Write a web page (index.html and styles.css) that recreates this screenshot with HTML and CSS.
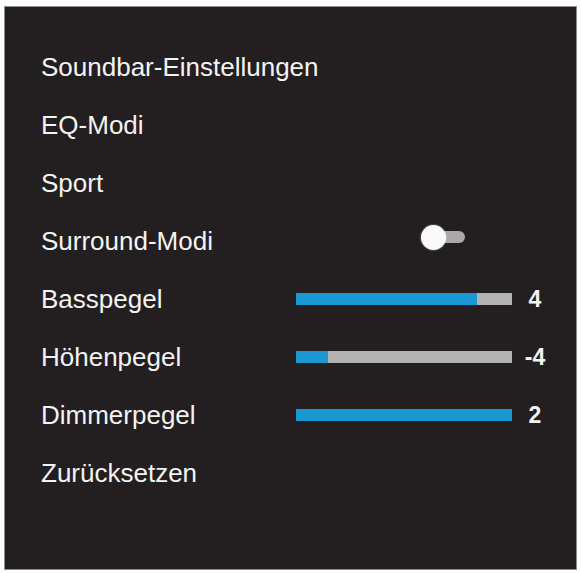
FILE: index.html
```html
<!DOCTYPE html>
<html lang="de">
<head>
<meta charset="utf-8">
<title>Soundbar-Einstellungen</title>
<link rel="stylesheet" href="styles.css">
</head>
<body>
<div class="panel">
  <div class="menu">
    <div class="label">Soundbar-Einstellungen</div>
    <div class="label">EQ-Modi</div>
    <div class="label">Sport</div>
    <div class="label">Surround-Modi</div>
    <div class="control">
      <div class="toggle"><span class="knob"></span><span class="track"></span></div>
    </div>
    <div class="value"></div>
    <div class="label">Basspegel</div>
    <div class="control"><div class="bar"><div class="fill" style="width:84%"></div></div></div>
    <div class="value">4</div>
    <div class="label">Höhenpegel</div>
    <div class="control"><div class="bar"><div class="fill" style="width:15%"></div></div></div>
    <div class="value">-4</div>
    <div class="label">Dimmerpegel</div>
    <div class="control"><div class="bar"><div class="fill" style="width:100%"></div></div></div>
    <div class="value">2</div>
    <div class="label">Zurücksetzen</div>
  </div>
</div>
</body>
</html>
```

FILE: styles.css
```css
html, body {
  margin: 0;
  padding: 0;
  background: #ffffff;
}

body {
  width: 581px;
  height: 573px;
  overflow: hidden;
}

.panel {
  box-sizing: border-box;
  margin: 6px 0 0 4px;
  width: 573px;
  height: 564px;
  background: #231f20;
  border: 1px solid #8c8c8c;
  padding: 31px 0 0 36px;
  font-family: "Liberation Sans", Arial, sans-serif;
  color: #f3f3f3;
}

.menu {
  display: grid;
  grid-template-columns: 255px 216px 46px;
  grid-auto-rows: 58px;
  align-items: center;
}

.label {
  grid-column: 1;
  font-size: 26px;
  line-height: 58px;
  white-space: nowrap;
}

.control {
  grid-column: 2;
  display: flex;
  align-items: center;
}

.value {
  grid-column: 3;
  text-align: center;
  font-size: 23px;
  font-weight: bold;
  line-height: 58px;
}

.toggle {
  display: flex;
  align-items: center;
  margin-left: 125px;
  margin-top: -8px;
}

.knob {
  position: relative;
  z-index: 1;
  width: 25px;
  height: 25px;
  border-radius: 50%;
  background: #fafafa;
  box-shadow: 0 0 2px rgba(255, 255, 255, 0.6);
}

.track {
  width: 26px;
  height: 12px;
  margin-left: -7px;
  border-radius: 0 6px 6px 0;
  background: #a9a9a9;
}

.bar {
  width: 216px;
  height: 12px;
  background: #b2b2b2;
  display: flex;
}

.fill {
  height: 100%;
  background: #1b98d1;
}
```
